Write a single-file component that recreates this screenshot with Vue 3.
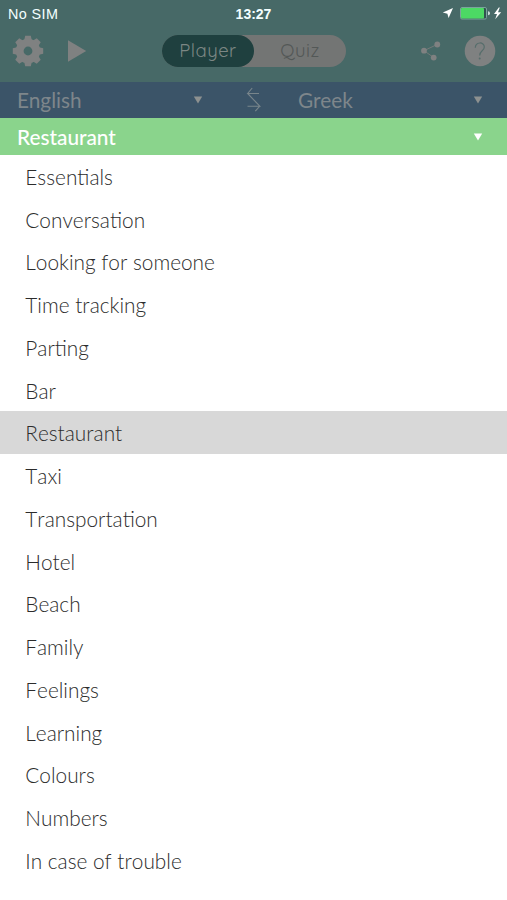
<script setup>
import { ref } from 'vue'

const topics = [
  'Essentials', 'Conversation', 'Looking for someone', 'Time tracking', 'Parting', 'Bar',
  'Restaurant', 'Taxi', 'Transportation', 'Hotel', 'Beach', 'Family', 'Feelings',
  'Learning', 'Colours', 'Numbers', 'In case of trouble',
]
const selected = ref('Restaurant')
const teeth = [0, 45, 90, 135, 180, 225, 270, 315]
</script>

<template>
  <div class="screen">
    <header class="top">
      <div class="status">
        <span class="carrier">No SIM</span>
        <span class="clock">13:27</span>
        <svg class="indicators" width="62" height="16" viewBox="0 0 62 16">
          <path d="M11 2 6.6 12 5.4 7.7 0.8 6.6z" fill="#fff" />
          <rect x="18.5" y="1.5" width="26" height="11.5" rx="1.5" fill="#31514f" stroke="#7ba39d" />
          <rect x="19" y="2" width="23" height="10.5" rx="1" fill="#4cd964" />
          <path d="M46 5.2q2 0 2 2t-2 2z" fill="#c9dbd8" />
          <path d="M56.8 1.5 52 8h3L53.2 13.2 59.2 6.2H56L57.8 1.5z" fill="#fff" />
        </svg>
      </div>
      <nav class="toolbar">
        <svg class="gear" width="32" height="32" viewBox="-16 -16 32 32">
          <path
            v-for="a in teeth" :key="a" :transform="`rotate(${a})`"
            d="M-4-10-2.8-15.2H2.8L4-10z" fill="#7f8181"
          />
          <circle r="8.3" fill="none" stroke="#7f8181" stroke-width="7.8" />
        </svg>
        <svg class="play" width="20" height="24" viewBox="0 0 20 24"><path d="M1 1.2 19.2 12 1 22.8z" fill="#7f8181" /></svg>
        <div class="segments">
          <button class="segment active"><span>Player</span></button>
          <button class="segment"><span>Quiz</span></button>
        </div>
        <svg class="share" width="22" height="22" viewBox="0 0 22 22">
          <path d="M17 4.5 4 10.7 13.7 17.5" fill="none" stroke="#737a79" stroke-width="1" />
          <g fill="#7f8181"><circle cx="17.3" cy="4.5" r="2.9" /><circle cx="4" cy="10.7" r="2.9" /><circle cx="13.7" cy="17.6" r="2.9" /></g>
        </svg>
        <svg class="help" width="32" height="32" viewBox="0 0 32 32">
          <circle cx="16" cy="16" r="15.3" fill="#7f8181" />
          <path d="M11.3 12.8C11.5 6.4 20.3 6.6 20.3 12C20.3 16 15.7 15.6 15.7 20.4" fill="none" stroke="#566d6b" stroke-width="1.2" />
          <circle cx="15.7" cy="23.5" r="1" fill="#566d6b" />
        </svg>
      </nav>
    </header>
    <section class="languages">
      <span class="from">English</span>
      <svg class="caret" width="10" height="8" viewBox="0 0 10 8"><path d="M.8.5H9.2L5 7.5z" /></svg>
      <svg class="swap" width="16" height="26" viewBox="0 0 16 26">
        <path d="M6.2 1 1.7 6.5H13M1.7 6.5 13.8 19.2H1.5M13.8 19.2 9.3 24.2" fill="none" stroke="#78858b" stroke-width="1.1" />
      </svg>
      <span class="to">Greek</span>
      <svg class="caret last" width="10" height="8" viewBox="0 0 10 8"><path d="M.8.5H9.2L5 7.5z" /></svg>
    </section>
    <section class="category">
      <span>{{ selected }}</span>
      <svg class="caret last" width="10" height="8" viewBox="0 0 10 8"><path d="M.8.5H9.2L5 7.5z" /></svg>
    </section>
    <ul class="topics">
      <li v-for="t in topics" :key="t" :class="{ selected: t === selected }" @click="selected = t">{{ t }}</li>
    </ul>
  </div>
</template>

<style>
body { background: #fff; }
</style>

<style scoped>
.screen { width: 507px; height: 900px; overflow: hidden; background: #fff; font-family: Lato, sans-serif; }
svg { display: block; flex: none; }
.top { height: 82px; background: #476967; }
.status {
  display: grid; grid-template-columns: 1fr auto 1fr; height: 28px; align-items: center;
  color: #f3ffff; font: 14px/28px "Liberation Sans", sans-serif;
}
.carrier { padding-left: 8px; font-size: 14.4px; letter-spacing: .4px; }
.clock { font-weight: 700; font-size: 14px; }
.indicators { justify-self: end; margin-right: 3px; }
.toolbar { display: flex; height: 46px; align-items: center; }
.gear { margin-left: 12px; }
.play { margin-left: 23px; }
.segments { display: flex; width: 184px; height: 32px; margin-left: 75px; border-radius: 16px; background: #737574; }
.segment {
  flex: 1; padding: 0 0 2px; border: 0; border-radius: 16px; background: none; color: #535857;
  font: 400 18.5px/28px Quicksand, Lato, sans-serif; letter-spacing: .5px;
}
.segment.active { background: #1f403f; color: #7c8784; }
.share { margin-left: 74px; }
.help { margin-left: 22px; }
.languages { display: flex; height: 36px; align-items: center; background: #3b5468; color: #7e868b; font-size: 20.8px; }
.from { width: 176px; padding-left: 17px; }
.from, .to { padding-bottom: 2px; }
.caret { fill: #8d9190; }
.swap { margin-left: 43px; }
.to { margin-left: 36px; }
.last { margin-left: auto; margin-right: 24px; }
.category { display: flex; height: 37px; align-items: center; background: #8ad48c; color: #fff; font-size: 20.8px; }
.category span { padding-left: 17px; font-weight: 500; }
.category .caret { fill: #fff; }
.topics { margin: -0.15px 0 0; padding: 0; list-style: none; }
.topics li {
  height: 42.75px; box-sizing: border-box; padding-left: 25.3px; color: #2c2c2c;
  font-size: 20.8px; font-weight: 300; font-kerning: none; line-height: 43px;
}
.topics .selected { background: #d8d8d8; }
</style>
